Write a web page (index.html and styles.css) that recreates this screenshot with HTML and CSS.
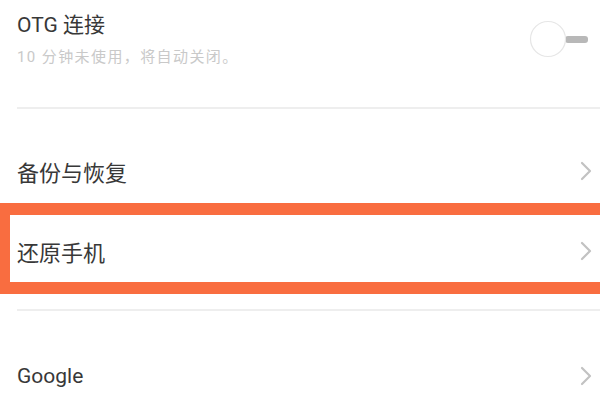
FILE: index.html
```html
<!DOCTYPE html>
<html lang="zh-CN">
<head>
<meta charset="utf-8">
<link rel="stylesheet" href="styles.css">
</head>
<body>
<div class="page">
  <div class="otg">
    <div class="otg-text">
      <div class="title">OTG 连接</div>
      <div class="sub">10 分钟未使用，将自动关闭。</div>
    </div>
    <svg class="toggle" width="62" height="40" viewBox="0 0 62 40">
      <rect x="36" y="16" width="23" height="7" rx="3" fill="#b8b8b8"/>
      <circle cx="19" cy="19" r="17.5" fill="#fff" stroke="#e6e6e6" stroke-width="1.2"/>
    </svg>
  </div>
  <div class="divider"></div>
  <div class="group">
    <div class="row"><span class="label">备份与恢复</span><svg class="chev" width="14" height="22" viewBox="0 0 14 22"><polyline points="3,3 11,11 3,19" fill="none" stroke="#c2c2c2" stroke-width="2.2" stroke-linecap="round" stroke-linejoin="round"/></svg></div>
    <div class="row highlighted"><span class="label">还原手机</span><svg class="chev" width="14" height="22" viewBox="0 0 14 22"><polyline points="3,3 11,11 3,19" fill="none" stroke="#c2c2c2" stroke-width="2.2" stroke-linecap="round" stroke-linejoin="round"/></svg></div>
  </div>
  <div class="divider"></div>
  <div class="group last">
    <div class="row"><span class="label latin">Google</span><svg class="chev" width="14" height="22" viewBox="0 0 14 22"><polyline points="3,3 11,11 3,19" fill="none" stroke="#c2c2c2" stroke-width="2.2" stroke-linecap="round" stroke-linejoin="round"/></svg></div>
  </div>
</div>
</body>
</html>
```

FILE: styles.css
```css
html, body {
  margin: 0;
  padding: 0;
  background: #fff;
  overflow: hidden;
}
.page {
  width: 600px;
  height: 400px;
  display: flex;
  flex-direction: column;
  font-family: Roboto, "Noto Sans CJK SC", sans-serif;
  color: #383838;
}
.page > * {
  flex-shrink: 0;
}
.otg {
  height: 107px;
  display: flex;
  justify-content: space-between;
  align-items: flex-start;
  padding: 10px 9px 0 17px;
  box-sizing: border-box;
}
.title {
  font-size: 21px;
  line-height: 30px;
}
.sub {
  margin-top: 5px;
  font-size: 15px;
  letter-spacing: 1.4px;
  line-height: 24px;
  color: #c9c9c9;
}
.toggle {
  margin-top: 10px;
}
.divider {
  height: 2px;
  margin-left: 17px;
  background: #eeeeee;
}
.group {
  padding: 22px 0 18px;
}
.row {
  position: relative;
  height: 80px;
  display: flex;
  align-items: center;
  justify-content: space-between;
  padding: 0 7px 0 17px;
}
.group.last {
  padding: 41px 0 0;
}
.group.last .row {
  height: 48px;
}
.label {
  font-size: 22px;
}
.label.latin {
  font-size: 21px;
}
.highlighted::after {
  content: "";
  position: absolute;
  top: -8px;
  bottom: -3px;
  left: 0;
  right: -20px;
  border: 12px solid #f96d40;
  border-left-width: 10px;
}
```
